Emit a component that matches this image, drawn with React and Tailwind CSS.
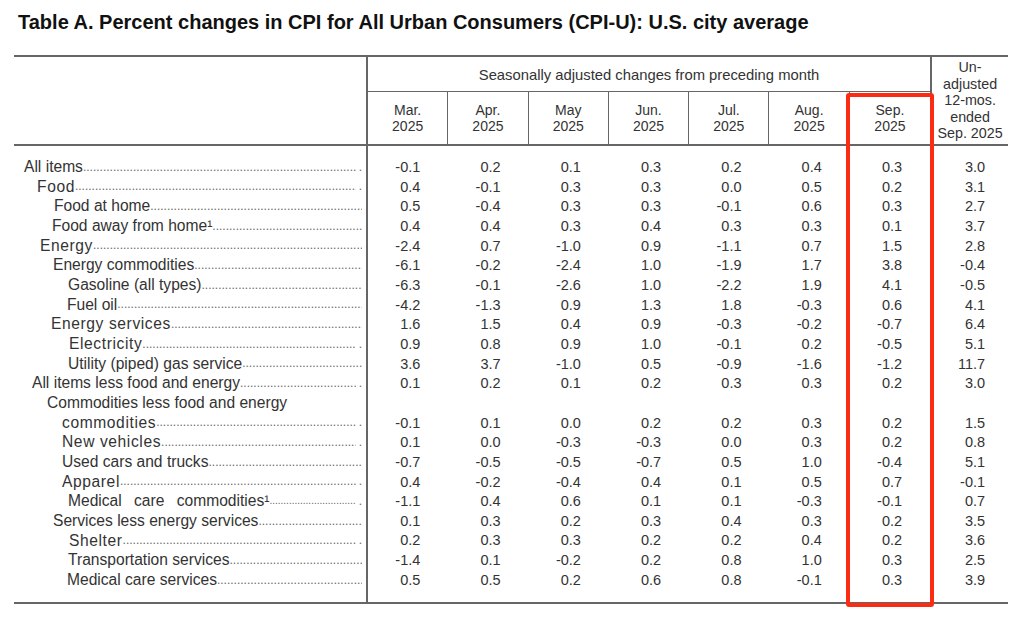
import React from 'react';

const rows = [
  { label: 'All items', pl: 'pl-[10px]', v: ['-0.1', '0.2', '0.1', '0.3', '0.2', '0.4', '0.3', '3.0'], end: true },
  { label: 'Food', pl: 'pl-[23px]', wide: true, v: ['0.4', '-0.1', '0.3', '0.3', '0.0', '0.5', '0.2', '3.1'], end: true },
  { label: 'Food at home', pl: 'pl-[40px]', v: ['0.5', '-0.4', '0.3', '0.3', '-0.1', '0.6', '0.3', '2.7'] },
  { label: 'Food away from home¹', pl: 'pl-[38px]', v: ['0.4', '0.4', '0.3', '0.4', '0.3', '0.3', '0.1', '3.7'] },
  { label: 'Energy', pl: 'pl-[26px]', wide: true, v: ['-2.4', '0.7', '-1.0', '0.9', '-1.1', '0.7', '1.5', '2.8'] },
  { label: 'Energy commodities', pl: 'pl-[39px]', v: ['-6.1', '-0.2', '-2.4', '1.0', '-1.9', '1.7', '3.8', '-0.4'] },
  { label: 'Gasoline (all types)', pl: 'pl-[54px]', v: ['-6.3', '-0.1', '-2.6', '1.0', '-2.2', '1.9', '4.1', '-0.5'] },
  { label: 'Fuel oil', pl: 'pl-[53px]', v: ['-4.2', '-1.3', '0.9', '1.3', '1.8', '-0.3', '0.6', '4.1'] },
  { label: 'Energy services', pl: 'pl-[37px]', wide: true, v: ['1.6', '1.5', '0.4', '0.9', '-0.3', '-0.2', '-0.7', '6.4'] },
  { label: 'Electricity', pl: 'pl-[55px]', wide: true, v: ['0.9', '0.8', '0.9', '1.0', '-0.1', '0.2', '-0.5', '5.1'], end: true },
  { label: 'Utility (piped) gas service', pl: 'pl-[54px]', v: ['3.6', '3.7', '-1.0', '0.5', '-0.9', '-1.6', '-1.2', '11.7'] },
  { label: 'All items less food and energy', pl: 'pl-[18px]', v: ['0.1', '0.2', '0.1', '0.2', '0.3', '0.3', '0.2', '3.0'], end: true },
  { label: 'Commodities less food and energy', pl: 'pl-[33px]', noDots: true },
  { label: 'commodities', pl: 'pl-[48px]', wide: true, v: ['-0.1', '0.1', '0.0', '0.2', '0.2', '0.3', '0.2', '1.5'], end: true },
  { label: 'New vehicles', pl: 'pl-[48px]', wide: true, v: ['0.1', '0.0', '-0.3', '-0.3', '0.0', '0.3', '0.2', '0.8'], end: true },
  { label: 'Used cars and trucks', pl: 'pl-[48px]', v: ['-0.7', '-0.5', '-0.5', '-0.7', '0.5', '1.0', '-0.4', '5.1'] },
  { label: 'Apparel', pl: 'pl-[48px]', wide: true, v: ['0.4', '-0.2', '-0.4', '0.4', '0.1', '0.5', '0.7', '-0.1'], end: true },
  { label: 'Medical care commodities¹', pl: 'pl-[54px]', spread: true, v: ['-1.1', '0.4', '0.6', '0.1', '0.1', '-0.3', '-0.1', '0.7'], end: true },
  { label: 'Services less energy services', pl: 'pl-[39px]', v: ['0.1', '0.3', '0.2', '0.3', '0.4', '0.3', '0.2', '3.5'] },
  { label: 'Shelter', pl: 'pl-[55px]', wide: true, v: ['0.2', '0.3', '0.3', '0.2', '0.2', '0.4', '0.2', '3.6'], end: true },
  { label: 'Transportation services', pl: 'pl-[54px]', v: ['-1.4', '0.1', '-0.2', '0.2', '0.8', '1.0', '0.3', '2.5'] },
  { label: 'Medical care services', pl: 'pl-[53px]', v: ['0.5', '0.5', '0.2', '0.6', '0.8', '-0.1', '0.3', '3.9'] },
];

const months = ['Mar.', 'Apr.', 'May', 'Jun.', 'Jul.', 'Aug.', 'Sep.'];
const dots = '.'.repeat(160);

function Label({ row }) {
  return (
    <div className={`flex h-[19.67px] items-center pr-[4px] ${row.pl}`}>
      <span
        className={`whitespace-nowrap ${row.wide ? 'tracking-[0.6px]' : ''} ${row.spread ? '[word-spacing:8px]' : ''}`}
      >
        {row.label}
      </span>
      {!row.noDots && (
        <span
          className={`min-w-0 flex-1 overflow-hidden whitespace-nowrap text-[#666] ${row.spread ? 'text-[10px]' : 'text-[12px]'}`}
        >
          {dots}
        </span>
      )}
      {!row.noDots && row.end && <span className="ml-[3px] text-[12px] text-[#666]">.</span>}
    </div>
  );
}

export default function App() {
  return (
    <div className="relative h-[620px] w-[1024px] overflow-hidden bg-white font-['Liberation_Sans',Arial,sans-serif] text-[#333]">
      <div className="h-[33px] pl-[18px] pt-[10px] text-[20px] font-bold leading-[24px] text-[#111]">
        Table A. Percent changes in CPI for All Urban Consumers (CPI-U): U.S. city average
      </div>

      <div className="ml-[14px] mt-[22px] w-[994px] border-y-2 border-[#666]">
        {/* header */}
        <div className="grid grid-cols-[354px_repeat(7,80.3px)_78px] grid-rows-[35px_52px] border-b-2 border-[#666] text-[14px] leading-[16px]">
          <div className="row-span-2 border-r-2 border-[#666]" />
          <div className="col-span-7 flex items-center justify-center border-b-[1.5px] border-[#666] pt-[2px] text-[14.8px]">
            Seasonally adjusted changes from preceding month
          </div>
          <div className="row-span-2 flex flex-col items-center justify-center border-l-2 border-[#666] text-center text-[14.3px] leading-[16.5px]">
            <span>Un-</span>
            <span>adjusted</span>
            <span>12-mos.</span>
            <span>ended</span>
            <span>Sep. 2025</span>
          </div>
          {months.map((m, i) => (
            <div
              key={m}
              className={`flex flex-col items-center justify-center text-center ${i < 6 ? 'border-r-[1.5px] border-[#666]' : ''}`}
            >
              <span>{m}</span>
              <span>2025</span>
            </div>
          ))}
        </div>

        {/* body */}
        <div className="flex">
          <div className="w-[354px] border-r-2 border-[#666] pb-[13px] pt-[11px] text-[15.6px]">
            {rows.map((r) => (
              <Label key={r.label} row={r} />
            ))}
          </div>
          <div className="flex-1 pt-[11px] text-[14.5px]">
            {rows.map((r) => (
              <div key={r.label} className="grid h-[19.67px] grid-cols-[repeat(7,80.3px)_78px] items-center">
                {r.v
                  ? r.v.map((x, i) => (
                      <span key={i} className={`text-right ${i < 7 ? 'pr-[28px]' : 'pr-[23px]'}`}>
                        {x}
                      </span>
                    ))
                  : null}
              </div>
            ))}
          </div>
        </div>
      </div>

      {/* highlight box */}
      <div className="absolute left-[846px] top-[93px] h-[514px] w-[88px] rounded-[3px] border-[4px] border-[#fb2b14]" />
    </div>
  );
}
